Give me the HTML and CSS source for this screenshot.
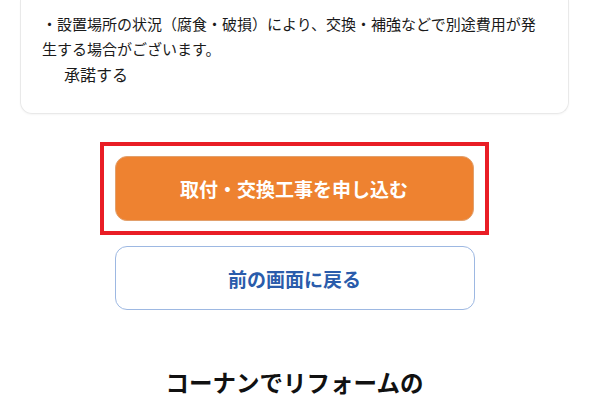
FILE: index.html
```html
<!DOCTYPE html>
<html lang="ja">
<head>
<meta charset="utf-8">
<link rel="stylesheet" href="styles.css">
</head>
<body>
<div class="page">
  <div class="card">
    <p class="note">・設置場所の状況（腐食・破損）により、交換・補強などで別途費用が発生する場合がございます。</p>
    <label class="agree">承諾する</label>
  </div>
  <div class="highlight">
    <a class="btn btn-primary" href="#">取付・交換工事を申し込む</a>
  </div>
  <a class="btn btn-back" href="#">前の画面に戻る</a>
  <h2 class="heading">コーナンでリフォームの</h2>
</div>
</body>
</html>
```
FILE: styles.css
```css
html, body {
  margin: 0;
  padding: 0;
  background: #ffffff;
}
body {
  font-family: "Noto Sans CJK JP", "Noto Sans", sans-serif;
  color: #1a1a1a;
}
.page {
  display: flex;
  flex-direction: column;
  align-items: center;
  padding: 0 21px 0 20px;
}
.card {
  align-self: stretch;
  border: 1px solid #e9e9e9;
  border-top: 0;
  border-radius: 0 0 12px 12px;
  box-shadow: 0 1px 2px rgba(0, 0, 0, 0.04);
  padding: 12px 21px 25px 21px;
}
.note {
  margin: 0;
  font-size: 15px;
  line-height: 24.5px;
  color: #1a1a1a;
}
.agree {
  display: block;
  padding-left: 22px;
  font-size: 16px;
  line-height: 27px;
  color: #1a1a1a;
}
.highlight {
  margin-top: 28px;
  width: 389px;
  box-sizing: border-box;
  border: 4px solid #e91d25;
  padding: 10px 11px;
  margin-left: -1px;
}
.btn {
  display: flex;
  align-items: center;
  justify-content: center;
  box-sizing: border-box;
  width: 360px;
  border-radius: 12px;
  font-size: 19px;
  font-weight: 700;
  text-decoration: none;
}
.btn-primary {
  width: 359px;
  height: 65px;
  background: #ee8230;
  border: 1px solid #e2a06c;
  color: #ffffff;
}
.btn-back {
  margin-top: 11px;
  height: 64px;
  background: #ffffff;
  border: 1px solid #9db8e2;
  color: #2a5cab;
}
.heading {
  margin: 55px 0 0;
  font-size: 23.5px;
  line-height: 34px;
  font-weight: 700;
  color: #111111;
}
```
